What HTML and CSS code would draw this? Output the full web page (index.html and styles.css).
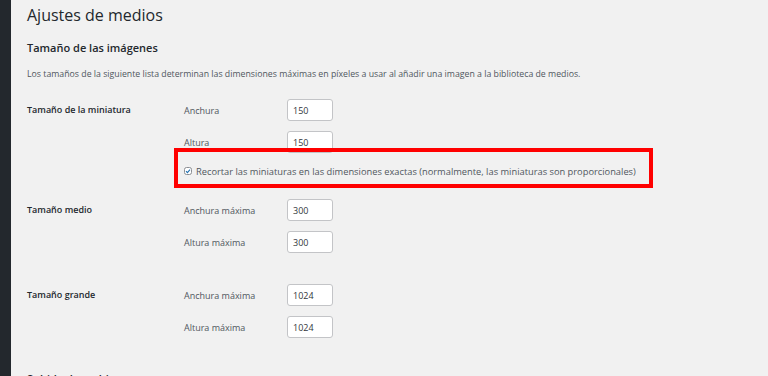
FILE: index.html
```html
<!DOCTYPE html>
<html lang="es">
<head>
    <meta charset="UTF-8">
    <meta name="viewport" content="width=device-width, initial-scale=1.0">
    <title>Ajustes de medios</title>
    <link rel="stylesheet" href="styles.css">
</head>
<body>

    <div class="sidebar"></div>

    <div class="content">
        <h1>Ajustes de medios</h1>

        <h2>Tamaño de las imágenes</h2>
        <p class="description">Los tamaños de la siguiente lista determinan las dimensiones máximas en píxeles a usar al añadir una imagen a la biblioteca de medios.</p>

        <!-- Miniatura -->
        <div class="size-group group-thumb">
            <div class="group-title">Tamaño de la miniatura</div>
            <div class="fields">
                <div class="field">
                    <label for="thumbW">Anchura</label>
                    <input type="text" id="thumbW" value="150">
                </div>
                <div class="field">
                    <label for="thumbH">Altura</label>
                    <input type="text" id="thumbH" value="150">
                </div>
                <div class="crop-row">
                    <span class="highlight"></span>
                    <svg class="check" width="8" height="8" viewBox="0 0 8 8">
                        <rect x="0.5" y="0.5" width="7" height="7" rx="2" fill="#fff" stroke="#8c8f94"/>
                        <path d="M2 4.2 L3.4 5.6 L6 2.6" fill="none" stroke="#2271b1" stroke-width="1.1"/>
                    </svg>
                    <span>Recortar las miniaturas en las dimensiones exactas (normalmente, las miniaturas son proporcionales)</span>
                </div>
            </div>
        </div>

        <!-- Medio -->
        <div class="size-group group-medium">
            <div class="group-title">Tamaño medio</div>
            <div class="fields">
                <div class="field">
                    <label for="medW">Anchura máxima</label>
                    <input type="text" id="medW" value="300">
                </div>
                <div class="field">
                    <label for="medH">Altura máxima</label>
                    <input type="text" id="medH" value="300">
                </div>
            </div>
        </div>

        <!-- Grande -->
        <div class="size-group group-large">
            <div class="group-title">Tamaño grande</div>
            <div class="fields">
                <div class="field">
                    <label for="largeW">Anchura máxima</label>
                    <input type="text" id="largeW" value="1024">
                </div>
                <div class="field">
                    <label for="largeH">Altura máxima</label>
                    <input type="text" id="largeH" value="1024">
                </div>
            </div>
        </div>

        <h2>Subida de archivos</h2>
    </div>

</body>
</html>
```

FILE: styles.css
```css
body {
    font-family: "Open Sans", "Noto Sans", sans-serif;
    margin: 0;
    padding: 0;
    display: flex;
    height: 376px;
    overflow: hidden;
    background-color: #f1f1f1;
    color: #23282d;
}

/* Menu lateral */
.sidebar {
    width: 11px;
    flex-shrink: 0;
    background-color: #23282d;
}

/* Conteudo */
.content {
    flex: 1;
    padding: 0 0 0 16px;
}

h1 {
    font-size: 16px;
    font-weight: 400;
    margin: 3px 0 0;
    line-height: 24px;
    color: #23282d;
}

h2 {
    font-size: 11px;
    font-weight: 600;
    margin: 13px 0 0;
    line-height: 16px;
    color: #23282d;
}

.description {
    font-size: 8.75px;
    line-height: 12px;
    margin: 12px 0 0;
    color: #50575e;
}

.size-group {
    display: flex;
}

.group-thumb {
    margin-top: 19px;
}

.group-medium {
    margin-top: 20px;
}

.group-large {
    margin-top: 31px;
}

.group-large + h2 {
    margin-top: 33px;
}

.group-title {
    width: 157px;
    font-size: 9px;
    font-weight: 600;
    line-height: 22px;
    color: #23282d;
}

.field {
    display: flex;
    align-items: center;
    height: 22px;
    margin-bottom: 10px;
}

.field:last-child {
    margin-bottom: 0;
}

.field label {
    width: 103px;
    font-size: 9px;
    color: #50575e;
}

.field input {
    box-sizing: border-box;
    width: 46px;
    height: 22px;
    padding: 0 5px;
    border: 1px solid #c3c4c7;
    border-radius: 3px;
    background-color: #fff;
    font-family: inherit;
    font-size: 9px;
    color: #32373c;
}

.crop-row {
    position: relative;
    display: flex;
    align-items: center;
    height: 16px;
    font-size: 9.3px;
    color: #50575e;
}

.crop-row .check {
    margin-right: 4px;
}

/* Marca vermelha de destaque */
.highlight {
    position: absolute;
    left: -10px;
    top: -15px;
    width: 479px;
    height: 40px;
    box-sizing: border-box;
    border: 4px solid #f00;
}
```
